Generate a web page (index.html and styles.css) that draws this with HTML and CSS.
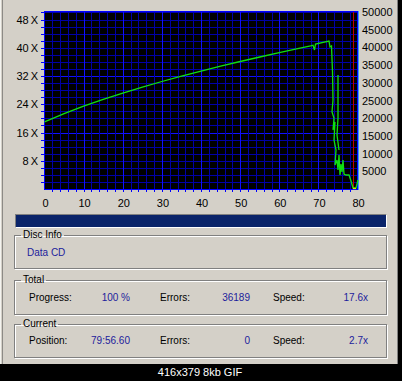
FILE: index.html
```html
<!DOCTYPE html>
<html lang="en">
<head>
    <meta charset="UTF-8">
    <title>CD Speed</title>
    <link rel="stylesheet" href="styles.css">
</head>
<body>
<div class="shot">
    <svg class="chart" width="397" height="212" viewBox="0 0 397 212" shape-rendering="crispEdges">
        <rect x="44" y="11" width="314" height="178" fill="#000"/>
        <g id="grid"></g>
        <line x1="353.5" y1="11" x2="353.5" y2="189" stroke="#c00000"/>
        <line x1="44" y1="11.5" x2="358" y2="11.5" stroke="#0000ff"/>
        <line x1="44.5" y1="11" x2="44.5" y2="190" stroke="#0000ff"/>
        <line x1="44" y1="189.5" x2="359" y2="189.5" stroke="#0000ff"/>
        <line x1="357.5" y1="11" x2="357.5" y2="190" stroke="#0000ff"/>
        <line x1="358.5" y1="11" x2="358.5" y2="190" stroke="#30a0ff"/>
        <g shape-rendering="auto" fill="none" stroke="#10e010" stroke-width="1.3">
            <polyline points="44.5,121.9 64.1,113.6 83.6,106.2 103.2,99.4 122.8,93.1 142.4,87.1 161.9,81.5 181.5,76.2 201.1,71.1 220.6,66.2 240.2,61.5 259.8,57 279.3,52.6 298.9,48.4 310.6,45.9 313,45.2 314.5,50 315.5,44 329,41 330,47 331.5,46 332.5,72 333,100 332,112 334,118 333,130 335,122 334,140 336,150 335,165 337,160 338,170 339,155 340,175 341,164 342,172 343,160 344,174 346,175 349,175 351,181 353,188 356,188 358,180"/>
            <polyline points="338,75 338,118 337,135 339,150"/>
            <line x1="353" y1="188.5" x2="356" y2="188.5" stroke="#e0e000"/>
        </g>
        <g class="ax" id="labels"></g>
    </svg>

    <div class="bar"><div class="fill"></div></div>

    <fieldset class="grp disc">
        <legend>Disc Info</legend>
        <div class="val">Data CD</div>
    </fieldset>

    <fieldset class="grp total">
        <legend>Total</legend>
        <div class="row">
            <span class="k">Progress:</span>
            <span class="v">100 %</span>
            <span class="k k2">Errors:</span>
            <span class="v">36189</span>
            <span class="k k3">Speed:</span>
            <span class="v">17.6x</span>
        </div>
    </fieldset>

    <fieldset class="grp current">
        <legend>Current</legend>
        <div class="row">
            <span class="k">Position:</span>
            <span class="v">79:56.60</span>
            <span class="k k2">Errors:</span>
            <span class="v">0</span>
            <span class="k k3">Speed:</span>
            <span class="v">2.7x</span>
        </div>
    </fieldset>
</div>
<div class="caption">416x379 8kb GIF</div>

<script>
    var ns = "http://www.w3.org/2000/svg";
    var grid = document.getElementById("grid");
    var labels = document.getElementById("labels");

    function line(x1, y1, x2, y2, color) {
        var l = document.createElementNS(ns, "line");
        l.setAttribute("x1", x1);
        l.setAttribute("y1", y1);
        l.setAttribute("x2", x2);
        l.setAttribute("y2", y2);
        l.setAttribute("stroke", color);
        grid.appendChild(l);
    }

    function text(x, y, str, anchor) {
        var t = document.createElementNS(ns, "text");
        t.setAttribute("x", x);
        t.setAttribute("y", y);
        t.setAttribute("text-anchor", anchor);
        t.textContent = str;
        labels.appendChild(t);
        return t;
    }

    // horizontal lines, every 2X
    for (var k = 1; k <= 25; k++) {
        var y = Math.round(189 - k * 7.0625) + 0.5;
        var major = (k == 8 || k == 16);
        line(45, y, 357, y, major ? "#1010ff" : "#0000a8");
        line(41, y, 44, y, "#0000ff");
    }

    // vertical lines, every 2 minutes
    for (var m = 2; m < 80; m += 2) {
        var x = Math.round(44.5 + m * 3.914) + 0.5;
        line(x, 12, x, 189, (m % 10 == 0) ? "#1010ff" : "#0000a8");
        line(x, 190, x, 192, "#0000ff");
    }

    // left axis
    for (var s = 8; s <= 48; s += 8) {
        var t = text(38, 189 - s * 3.531 + 4, s, "end");
        var tx = document.createElementNS(ns, "tspan");
        tx.setAttribute("dx", "2");
        tx.textContent = "X";
        t.appendChild(tx);
    }

    // right axis
    for (var r = 5000; r <= 50000; r += 5000) {
        text(362, 189 - r / 5000 * 17.7 + 4, r, "start");
    }

    // bottom axis
    for (var b = 0; b <= 80; b += 10) {
        text(44.5 + b * 3.914 + 1, 207, b, "middle");
    }
</script>
</body>
</html>
```

FILE: styles.css
```css
* {
    margin: 0;
    padding: 0;
}

body {
    background: #000;
    width: 402px;
    height: 381px;
    overflow: hidden;
    font-family: "Liberation Sans", Arial, sans-serif;
    font-size: 10px;
}

.shot {
    width: 398px;
    height: 364px;
    box-sizing: border-box;
    border-right: 1px solid #808080;
    background: linear-gradient(to right, #f4f4f0 0 1px, #d4d0c8 1px 2px, #8c8a86 2px 3px, #d4d0c8 3px);
    overflow: hidden;
}

.chart {
    display: block;
}

.ax {
    font-family: "Liberation Sans", Arial, sans-serif;
    font-size: 11px;
    fill: #000;
}

.bar {
    margin: 2px 10px 0 15px;
    height: 14px;
    box-sizing: border-box;
    border: 1px solid;
    border-color: #808080 #fff #fff #808080;
}

.bar .fill {
    height: 100%;
    background: #0a246a;
}

.grp {
    margin: 1px 10px 0 14px;
    border: 1px solid #808080;
    box-shadow: 1px 1px 0 #fff, inset 1px 1px 0 #fff;
    padding: 0;
}

.grp legend {
    margin-left: 6px;
    padding: 0 2px;
    line-height: 12px;
    color: #000;
}

.disc {
    padding: 6px 0 9px 0;
}

.total {
    margin-top: 5px;
    padding-top: 6px;
    padding-bottom: 10px;
}

.current {
    margin-top: 3px;
    padding-top: 5px;
    padding-bottom: 10px;
}

.val {
    padding-left: 12px;
    color: #1c1c9c;
    line-height: 12px;
}

.row {
    display: grid;
    grid-template-columns: 56px 45px 90px 30px 73px 45px;
    padding-left: 14px;
    line-height: 12px;
}

.k {
    color: #000;
}

.k2 {
    padding-left: 30px;
}

.k3 {
    padding-left: 23px;
}

.v {
    color: #1c1c9c;
    text-align: right;
}

.caption {
    width: 400px;
    height: 17px;
    line-height: 17px;
    text-align: center;
    color: #fff;
    font-size: 11px;
}
```
